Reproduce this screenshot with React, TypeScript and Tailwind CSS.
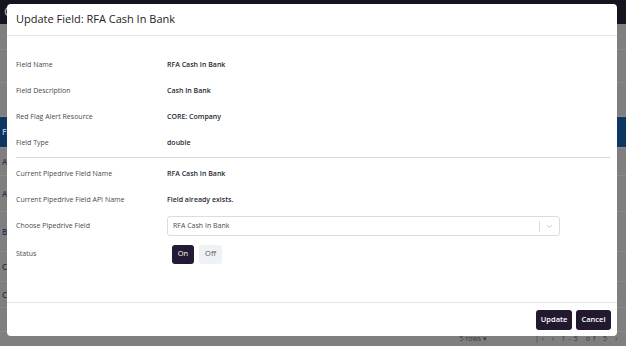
import React from 'react';
import { ChevronDown } from 'lucide-react';

const fieldRows: Array<[string, string]> = [
  ['Field Name', 'RFA Cash In Bank'],
  ['Field Description', 'Cash In Bank'],
  ['Red Flag Alert Resource', 'CORE: Company'],
  ['Field Type', 'double']
];

const pipedriveRows: Array<[string, string]> = [
  ['Current Pipedrive Field Name', 'RFA Cash In Bank'],
  ['Current Pipedrive Field API Name', 'Field already exists.']
];

const backdropRows = [
  { h: 'h-[26px]', text: '', blue: false },
  { h: 'h-[33px]', text: '', blue: false },
  { h: 'h-[34px]', text: '', blue: false },
  { h: 'h-[31px]', text: 'Fi', blue: true },
  { h: 'h-[28px]', text: 'A', blue: false },
  { h: 'h-[36px]', text: 'A', blue: false },
  { h: 'h-[40px]', text: 'Ba', blue: false },
  { h: 'h-[30px]', text: 'Ca', blue: false },
  { h: 'h-[26px]', text: 'Ca', blue: false },
  { h: 'h-[24px]', text: '', blue: false }
];

function Row({ label, value }: { label: string; value: string }) {
  return (
    <div className="flex h-[26px] items-center">
      <span className="w-[151px] shrink-0 text-[7px] text-[#4a4a4a]">{label}</span>
      <span className="text-[7px] font-semibold text-[#262a33]">{value}</span>
    </div>
  );
}

export default function App() {
  return (
    <div className="relative h-[346px] w-[626px] overflow-hidden bg-[#7f7f7f] font-['Open_Sans',sans-serif]">
      {/* dimmed page behind the dialog */}
      <div className="flex h-[24px] items-center bg-[#17131f] px-1 text-[13px] text-[#bdbdbd]">Cla</div>
      {backdropRows.map((row, index) => (
        <div
          key={index}
          className={`${row.h} flex items-center border-b border-[#8a8a8a] px-[2px] text-[8px] font-semibold ${row.blue ? 'bg-[#0d3760] text-[#b9c3cf]' : 'text-[#1f3550]'}`}
        >
          {row.text}
        </div>
      ))}
      <div className="flex h-[14px] items-center justify-end gap-[48px] pr-[6px] text-[7px] text-[#3a3a3a]">
        <span>5 rows ▾</span>
        <span className="tracking-[3px]">|‹ ‹ 1-5 of 5 ›</span>
      </div>

      {/* dialog */}
      <div className="absolute left-[7px] top-[4px] flex h-[332px] w-[610px] flex-col rounded-[4px] bg-white">
        <div className="flex h-[32px] items-center border-b border-[#e6e6e6] px-[9px]">
          <h1 className="text-[11px] font-medium text-[#222]">Update Field: RFA Cash In Bank</h1>
        </div>

        <div className="flex-1 pl-[9px] pr-[7px] pt-[16px]">
          {fieldRows.map(([label, value]) => (
            <Row key={label} label={label} value={value} />
          ))}
          <div className="mb-[3px] mt-[1px] border-t border-[#d6d6d6]" />
          {pipedriveRows.map(([label, value]) => (
            <Row key={label} label={label} value={value} />
          ))}
          <div className="flex h-[26px] items-center">
            <span className="w-[151px] shrink-0 text-[7px] text-[#4a4a4a]">Choose Pipedrive Field</span>
            <div className="flex h-[20px] w-[393px] items-center rounded-[3px] border border-[#dcdcdc]">
              <span className="flex-1 pl-[5px] text-[7px] text-[#4a4a4a]">RFA Cash In Bank</span>
              <span className="h-[11px] w-px bg-[#dcdcdc]" />
              <ChevronDown className="mx-[5px] h-[9px] w-[9px] text-[#b5b5b5]" strokeWidth={2} />
            </div>
          </div>
          <div className="flex h-[30px] items-center">
            <span className="w-[156px] shrink-0 text-[7px] text-[#4a4a4a]">Status</span>
            <div className="flex gap-[5px]">
              <button className="h-[19px] w-[22px] rounded-[3px] bg-[#241a35] text-[7.5px] text-white">On</button>
              <button className="h-[19px] w-[23px] rounded-[3px] bg-[#eff2f5] text-[7.5px] text-[#555]">Off</button>
            </div>
          </div>
        </div>

        <div className="flex h-[34px] items-center justify-end gap-[4px] border-t border-[#e6e6e6] pr-[6px]">
          <button className="h-[20px] w-[36px] rounded-[3px] bg-[#23192f] text-[7.5px] font-semibold text-white">Update</button>
          <button className="h-[20px] w-[35px] rounded-[3px] bg-[#23192f] text-[7.5px] font-semibold text-white">Cancel</button>
        </div>
      </div>
    </div>
  );
}
